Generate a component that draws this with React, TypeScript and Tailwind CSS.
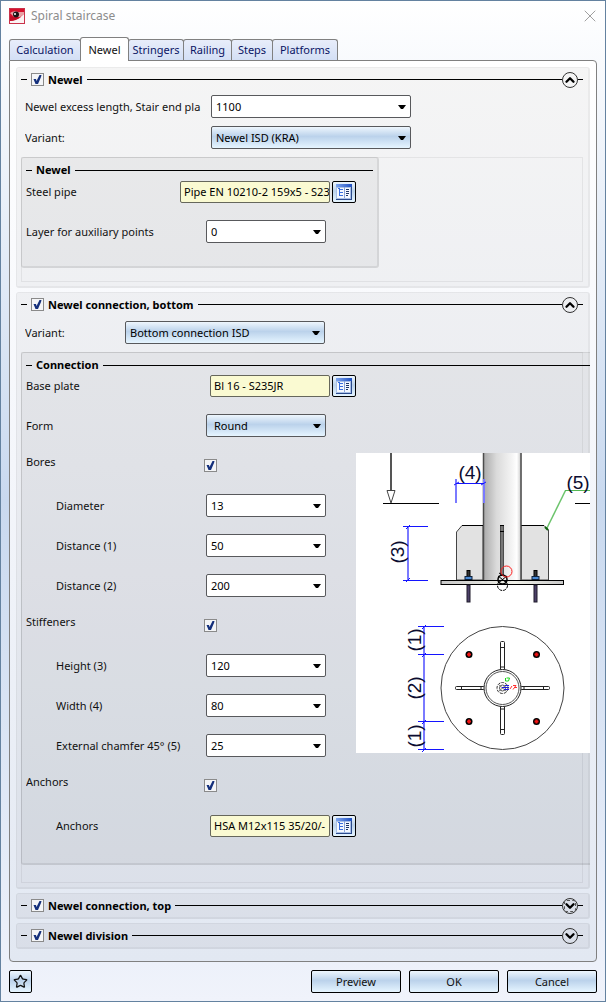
import { useId, useState } from "react";
import type { ReactNode } from "react";
import clsx from "clsx";
import { ChevronDown, ChevronUp, Star, X } from "lucide-react";

const TABS = [
  { name: "Calculation", width: "w-[72px]" },
  { name: "Newel", width: "w-[49px]" },
  { name: "Stringers", width: "w-[56px]" },
  { name: "Railing", width: "w-[49px]" },
  { name: "Steps", width: "w-[42px]" },
  { name: "Platforms", width: "w-[66px]" },
];

const GLOSSY =
  "bg-linear-to-b from-[#eef6fd] via-[#bbd2eb] via-45% to-[#e6f5ff]";

const Logo = () => (
  <svg width="16" height="16" viewBox="0 0 16 16" aria-hidden="true">
    <rect width="16" height="16" fill="#d8102c" />
    <path d="M1 5 Q5 2 9 4 L15 4 L15 6 L11 9 L5 9 Z" fill="#e8a0a4" />
    <path d="M1 15 L1 13 Q9 12 15 6 L15 15 Z" fill="#fbf3f3" />
    <path d="M1 8 Q6 11 12 9 Q7 13 1 13 Z" fill="#c40d26" />
    <circle cx="7" cy="6.5" r="3" fill="#1c1416" />
    <circle cx="6" cy="6" r="1" fill="#ffffff" />
    <rect x="0.5" y="0.5" width="15" height="15" fill="none" stroke="#c9324a" />
  </svg>
);

const CatalogIcon = () => (
  <svg width="16" height="16" viewBox="0 0 16 16" aria-hidden="true">
    <defs>
      <linearGradient id="catalog-bar">
        <stop offset="0" stopColor="#7fa6ee" />
        <stop offset="1" stopColor="#1f4fc0" />
      </linearGradient>
    </defs>
    <rect width="16" height="16" fill="#2b4a8c" />
    <rect width="15" height="15" fill="#a9bfe6" />
    <rect width="16" height="3" fill="url(#catalog-bar)" />
    <rect x="1" y="4" width="7" height="10" fill="#f4f8ff" />
    <rect x="9" y="4" width="5" height="10" fill="#f4f8ff" />
    <path d="M2 4.5h2M3.5 5v7M3 5.5h4M3 8.5h4M3 11.5h4" stroke="#3a6fe0" fill="none" />
    <path d="M10 5.5h3M10 7.5h3M10 9.5h3M10 11.5h2" stroke="#1d3566" fill="none" />
    <path d="M8.5 3v11" stroke="#8aa5d8" />
  </svg>
);

type CheckboxProps = { label: string; id?: string };

const Checkbox = ({ label, id }: CheckboxProps) => (
  <span className="relative block size-[13px] shrink-0">
    <input
      id={id}
      type="checkbox"
      defaultChecked
      aria-label={label}
      className="peer block size-[13px] appearance-none border border-[#8a8a8a] bg-[#f4f5f7]"
    />
    <svg
      viewBox="0 0 13 13"
      className="pointer-events-none absolute inset-0 hidden size-[13px] peer-checked:block"
      aria-hidden="true"
    >
      <path d="M2.5 6 L5 6 L5.5 8 L8.5 2 L10.5 2 L10 4 L7 11 L4.5 11 Z" fill="#15307c" />
    </svg>
  </span>
);

type ComboProps = {
  id: string;
  value: string;
  glossy?: boolean;
  inset?: boolean;
  className: string;
};

const Combo = ({ id, value, glossy, inset, className }: ComboProps) => (
  <span className={clsx("relative block h-[23px] shrink-0", className)}>
    <select
      id={id}
      defaultValue={value}
      className={clsx(
        "block h-full w-full appearance-none rounded-[2px] border border-[#58595c] text-black",
        glossy ? GLOSSY : "bg-white",
        inset ? "pl-[7px]" : "pl-1",
      )}
    >
      <option>{value}</option>
    </select>
    <svg
      width="8"
      height="4"
      viewBox="0 0 8 4"
      className="pointer-events-none absolute top-[10px] right-[5px]"
      aria-hidden="true"
    >
      <path d="M0 0h8L5 4H3Z" fill="#000000" />
    </svg>
  </span>
);

type CatalogFieldProps = { id: string; value: string; className: string };

const CatalogField = ({ id, value, className }: CatalogFieldProps) => (
  <>
    <input
      id={id}
      readOnly
      defaultValue={value}
      className={clsx(
        "block h-[22px] shrink-0 rounded-[2px] border border-[#66675c] bg-[#fafad2] pl-[3px] text-black",
        className,
      )}
    />
    <button
      type="button"
      aria-label="Open catalog"
      className={clsx(
        "ml-0.5 flex h-[22px] w-6 shrink-0 items-center justify-center rounded-[2px] border border-black",
        GLOSSY,
      )}
    >
      <CatalogIcon />
    </button>
  </>
);

type RowProps = {
  label: string;
  labelWidth: string;
  indent?: boolean;
  raised?: boolean;
  children: (id: string) => ReactNode;
};

const Row = ({ label, labelWidth, indent, raised, children }: RowProps) => {
  const id = useId();
  return (
    <div className="flex h-[23px] items-center">
      <label
        htmlFor={id}
        className={clsx(
          "shrink-0 overflow-hidden whitespace-nowrap",
          labelWidth,
          indent && "pl-[30px]",
          raised && "self-start",
        )}
      >
        {label}
      </label>
      {children(id)}
    </div>
  );
};

const BoxTitle = ({ children }: { children: ReactNode }) => (
  <div className="flex h-[14px] items-center">
    <span className="h-px w-1.5 bg-black" />
    <h3 className="px-1 font-bold text-black">{children}</h3>
    <span className="h-px flex-1 bg-black" />
  </div>
);

type GroupProps = {
  title: string;
  defaultOpen?: boolean;
  focused?: boolean;
  children?: ReactNode;
};

const Group = ({ title, defaultOpen = false, focused, children }: GroupProps) => {
  const [open, setOpen] = useState(defaultOpen);
  const Chevron = open ? ChevronUp : ChevronDown;

  return (
    <section className="rounded-[3px] border border-r-2 border-b-2 border-black/8 bg-black/4 bg-clip-padding pl-1">
      <div className="flex h-[23px] items-center pr-[5px]">
        <span className="mr-1 h-px w-1.5 bg-black" />
        <Checkbox label={title} />
        <h2 className="px-1 font-bold text-black">{title}</h2>
        <span className="h-px flex-1 bg-black" />
        <button
          type="button"
          aria-expanded={open}
          aria-label={title}
          onClick={() => setOpen(!open)}
          className="relative flex size-4 items-center justify-center rounded-full border border-[#333333] text-black"
        >
          {focused && (
            <span className="absolute inset-px rounded-[3px] border border-dashed border-[#555555]" />
          )}
          <Chevron className="size-3.5 shrink-0" strokeWidth={4} />
        </button>
        <span className="h-px w-[5px] bg-black" />
      </div>
      {open && children}
    </section>
  );
};

const DIM = "#1414ff";
const DIM_SOFT = "#7a7aff";

const BasePlateDrawing = () => (
  <svg
    viewBox="0 0 234 300"
    className="block h-[300px] w-[234px] shrink-0 bg-white"
    role="img"
    aria-label="Base plate with stiffeners and anchors"
  >
    <defs>
      <linearGradient id="pipe">
        <stop offset="0" stopColor="#a8a8a8" />
        <stop offset="0.35" stopColor="#dadada" />
        <stop offset="0.75" stopColor="#f4f4f4" />
        <stop offset="0.88" stopColor="#ffffff" />
        <stop offset="1" stopColor="#c4c4c4" />
      </linearGradient>
      <linearGradient id="plate">
        <stop offset="0" stopColor="#c8c8c8" />
        <stop offset="0.6" stopColor="#f0f0e8" />
        <stop offset="1" stopColor="#c8c8c8" />
      </linearGradient>
    </defs>

    {/* side view */}
    <path d="M35 0V37" stroke="#555555" strokeWidth="2" />
    <path d="M31 37.5H39L35 50Z" fill="#ffffff" stroke="#444444" />
    <path d="M27 50.5H83M219 50.5H234" stroke="#000000" />
    <path d="M100.5 127V79L106 72.5H127V127Z" fill="#e2e2e2" stroke="#444444" />
    <path d="M165.5 72.5H188L192.5 77V127H165.5Z" fill="#e2e2e2" stroke="#444444" />
    <rect x="127" y="-1" width="38.5" height="128" fill="url(#pipe)" />
    <path d="M127.5 0V127M165 0V127" stroke="#4c4c4c" strokeWidth="1.5" />
    <path d="M106 72.5H127M165.5 72.5H188" stroke="#000000" />
    <rect x="144.5" y="72.5" width="3" height="50" fill="#777777" stroke="#4c4c4c" />
    <path d="M144 72.5h4M144 78.5h4" stroke="#000000" />
    <rect x="85" y="127.5" width="122.5" height="4" fill="url(#plate)" stroke="#000000" />
    {[112.5, 179.5].map((x) => (
      <g key={x}>
        <rect x={x - 1.5} y="117.5" width="3" height="9" fill="#333333" stroke="#000000" />
        <rect x={x - 3.5} y="123.5" width="7" height="3" fill="#4a8ad4" stroke="#10233c" />
        <rect x={x - 1.5} y="132" width="3" height="17" fill="#4c4068" stroke="#1e1b2a" />
      </g>
    ))}
    <circle cx="146.5" cy="126.5" r="4.5" fill="none" stroke="#000000" strokeWidth="1.5" />
    <circle cx="146.5" cy="132.5" r="5" fill="none" stroke="#000000" strokeDasharray="3 1" />
    <path d="M142 123l9 7M151 123l-9 7M143 120l5 3" stroke="#000000" />
    <circle cx="150.5" cy="118.5" r="5.5" fill="none" stroke="#ff2020" />

    {/* dimensions of the side view */}
    <path d="M100 26V50M128 26V50M52 73V128" stroke={DIM_SOFT} strokeWidth="2" />
    <path d="M100 30.5H128M47 73.5H72M47 127.5H72" stroke={DIM} />
    <path d="M98 32l5-3M125 32l5-3M50 76l4-4M50 129l4-4" stroke={DIM} />
    <path d="M190.5 76L209.5 37.5" stroke="#6cc46c" strokeWidth="1.5" fill="none" />
    <path d="M209 37.5H234" stroke="#55b855" />
    <path d="M189 74l3 3" stroke="#106010" strokeWidth="2" />

    {/* top view */}
    <circle cx="146.5" cy="235" r="61.5" fill="none" stroke="#444444" />
    <g fill="#ffffff" stroke="#222222">
      <rect x="144.5" y="188.5" width="4" height="29" rx="1" />
      <rect x="144.5" y="252.5" width="4" height="29" rx="1" />
      <rect x="99.5" y="233.5" width="29" height="3" rx="1" />
      <rect x="164.5" y="233.5" width="29" height="3" rx="1" />
      <path d="M144.5 194.5h4M144.5 214h4M144.5 256h4M144.5 276.5h4" />
      <path d="M105.5 233.5v3M125 233.5v3M168 233.5v3M187.5 233.5v3" />
      <circle cx="146.5" cy="235" r="18.5" />
    </g>
    <circle cx="146.5" cy="235" r="16.5" fill="none" stroke="#555555" />
    <circle cx="146.5" cy="235" r="5.5" fill="none" stroke="#333333" strokeDasharray="3 1" />
    <circle cx="146.5" cy="235" r="3" fill="none" stroke="#555555" />
    <path d="M142 231l9 8M151 231l-9 8" stroke="#777777" />
    <path d="M149.5 225v3h3l1-3h-3" stroke="#18d818" fill="none" />
    <path d="M146 234.5h7M149 232.5h4M148 236.5h5" stroke="#1c1ce0" />
    <path d="M154 236l2-3M157 232.5h3l-3 4M158 234.5h3" stroke="#ff3030" fill="none" />
    {[113, 180.5].map((x) =>
      [201.5, 268.5].map((y) => (
        <g key={`${x}-${y}`}>
          <circle cx={x} cy={y} r="3.5" fill="#000000" />
          <path d={`M${x - 2} ${y}h4M${x} ${y - 2}v4`} stroke="#f01414" strokeWidth="2" />
        </g>
      )),
    )}

    {/* dimensions of the top view */}
    <path d="M68 173V297" stroke={DIM_SOFT} strokeWidth="2" />
    <path d="M62 173.5H88M62 201.5H88M62 268.5H88M62 296.5H88" stroke={DIM} />
    <path d="M66 176l4-4M66 204l4-4M66 271l4-4M66 299l4-4" stroke={DIM} />

    <g fill="#0c0c30" fontFamily="Liberation Sans, sans-serif" fontSize="19" textAnchor="middle">
      <text x="114" y="26">(4)</text>
      <text x="222" y="36">(5)</text>
      <text transform="translate(48 99) rotate(-90)">(3)</text>
      <text transform="translate(65 187) rotate(-90)">(1)</text>
      <text transform="translate(65 235) rotate(-90)">(2)</text>
      <text transform="translate(65 283) rotate(-90)">(1)</text>
    </g>
  </svg>
);

const NewelGroup = () => (
  <Group title="Newel" defaultOpen>
    <div className="flex flex-col gap-2 pt-1 pb-2 pl-1">
      <Row label="Newel excess length, Stair end pla" labelWidth="w-[186px]">
        {(id) => <Combo id={id} value="1100" className="w-[200px]" />}
      </Row>
      <Row label="Variant:" labelWidth="w-[186px]">
        {(id) => <Combo id={id} value="Newel ISD (KRA)" glossy className="w-[200px]" />}
      </Row>
    </div>
    <div className="mr-[5px] mb-1 border border-black/6 pb-[13px]">
      <div className="-mt-px -ml-px w-[358px] rounded-[3px] border border-r-2 border-b-2 border-black/8 bg-black/4 px-1 pt-[5px] pb-[23px]">
        <BoxTitle>Newel</BoxTitle>
        <div className="flex flex-col gap-[17px] pt-[3px]">
          <Row label="Steel pipe" labelWidth="w-[154px]">
            {(id) => (
              <CatalogField id={id} value="Pipe EN 10210-2 159x5 - S235JRH" className="w-[150px]" />
            )}
          </Row>
          <Row label="Layer for auxiliary points" labelWidth="w-[180px]">
            {(id) => <Combo id={id} value="0" className="w-[120px]" />}
          </Row>
        </div>
      </div>
    </div>
  </Group>
);

const FIELD = "w-[120px]";

const BottomConnectionGroup = () => (
  <Group title="Newel connection, bottom" defaultOpen>
    <div className="pt-[5px] pb-2 pl-1">
      <Row label="Variant:" labelWidth="w-[100px]">
        {(id) => <Combo id={id} value="Bottom connection ISD" glossy className="w-[200px]" />}
      </Row>
    </div>
    <div className="mr-[5px] mb-1 border border-black/6 pb-[17px]">
      <div className="-mt-px -mr-2 -ml-px rounded-l-[3px] border border-r-0 border-b-2 border-black/8 bg-black/4 pt-[5px] pl-1">
        <BoxTitle>Connection</BoxTitle>
        <div className="flex justify-between">
          <div className="flex flex-col gap-[17px] pt-[2px] pb-[26px]">
            <Row label="Base plate" labelWidth="w-[184px]">
              {(id) => <CatalogField id={id} value="Bl 16 - S235JR" className={FIELD} />}
            </Row>
            <Row label="Form" labelWidth="w-[180px]">
              {(id) => <Combo id={id} value="Round" glossy inset className={FIELD} />}
            </Row>
            <Row label="Bores" labelWidth="w-[178px]" raised>
              {(id) => <Checkbox id={id} label="Bores" />}
            </Row>
            <Row label="Diameter" labelWidth="w-[180px]" indent>
              {(id) => <Combo id={id} value="13" className={FIELD} />}
            </Row>
            <Row label="Distance (1)" labelWidth="w-[180px]" indent>
              {(id) => <Combo id={id} value="50" className={FIELD} />}
            </Row>
            <Row label="Distance (2)" labelWidth="w-[180px]" indent>
              {(id) => <Combo id={id} value="200" className={FIELD} />}
            </Row>
            <Row label="Stiffeners" labelWidth="w-[178px]" raised>
              {(id) => <Checkbox id={id} label="Stiffeners" />}
            </Row>
            <Row label="Height (3)" labelWidth="w-[180px]" indent>
              {(id) => <Combo id={id} value="120" className={FIELD} />}
            </Row>
            <Row label="Width (4)" labelWidth="w-[180px]" indent>
              {(id) => <Combo id={id} value="80" className={FIELD} />}
            </Row>
            <Row label="External chamfer 45° (5)" labelWidth="w-[180px]" indent>
              {(id) => <Combo id={id} value="25" className={FIELD} />}
            </Row>
            <Row label="Anchors" labelWidth="w-[178px]" raised>
              {(id) => <Checkbox id={id} label="Anchors" />}
            </Row>
            <Row label="Anchors" labelWidth="w-[184px]" indent>
              {(id) => <CatalogField id={id} value="HSA M12x115 35/20/-" className={FIELD} />}
            </Row>
          </div>
          <div className="pt-[81px]">
            <BasePlateDrawing />
          </div>
        </div>
      </div>
    </div>
  </Group>
);

const App = () => {
  const [active, setActive] = useState("Newel");

  return (
    <main className="flex min-h-screen flex-col border border-[#6482a0] bg-linear-to-b from-white via-[#c9d9ef] via-50% to-[#f0f3fb] px-2 pb-2 font-['Noto_Sans',sans-serif] text-[11px] leading-4 text-[#111111]">
      <header className="flex h-[29px] items-center gap-1.5">
        <Logo />
        <h1 className="flex-1 text-[12px] text-[#8c8c8c]">Spiral staircase</h1>
        <button type="button" aria-label="Close" className="-mr-[3px] text-[#8c8c8c]">
          <X className="size-5" strokeWidth={1} />
        </button>
      </header>

      <div role="tablist" className="mt-[7px] flex h-[23px] items-end pl-px">
        {TABS.map(({ name, width }) => (
          <button
            key={name}
            type="button"
            role="tab"
            aria-selected={name === active}
            onClick={() => setActive(name)}
            className={clsx(
              "-ml-px shrink-0 rounded-t-[3px] border border-b-0 border-[#808080]",
              width,
              name === active
                ? "z-10 -mb-px h-6 bg-white"
                : "h-[21px] bg-linear-to-b from-[#e8edfa] to-[#d3dff5] text-[#0a1464]",
            )}
          >
            {name}
          </button>
        ))}
      </div>

      <div
        role="tabpanel"
        className="flex flex-1 flex-col gap-1 rounded-[4px] rounded-tl-none border border-[#808080] bg-linear-to-b from-white via-[#f4f6fb] via-45% to-[#e2e8f2] px-1.5 pt-1.5 pb-3"
      >
        <NewelGroup />
        <BottomConnectionGroup />
        <Group title="Newel connection, top" focused />
        <Group title="Newel division" />
      </div>

      <footer className="flex gap-2 pt-2">
        <button
          type="button"
          aria-label="Favourites"
          className={clsx("mr-auto flex size-[23px] items-center justify-center rounded-[2px] border border-black", GLOSSY)}
        >
          <Star className="size-[15px]" strokeWidth={2} />
        </button>
        {["Preview", "OK", "Cancel"].map((name) => (
          <button
            key={name}
            type="button"
            className={clsx("h-[23px] w-[90px] rounded-[2px] border border-black", GLOSSY)}
          >
            {name}
          </button>
        ))}
      </footer>
    </main>
  );
};

export default App;
